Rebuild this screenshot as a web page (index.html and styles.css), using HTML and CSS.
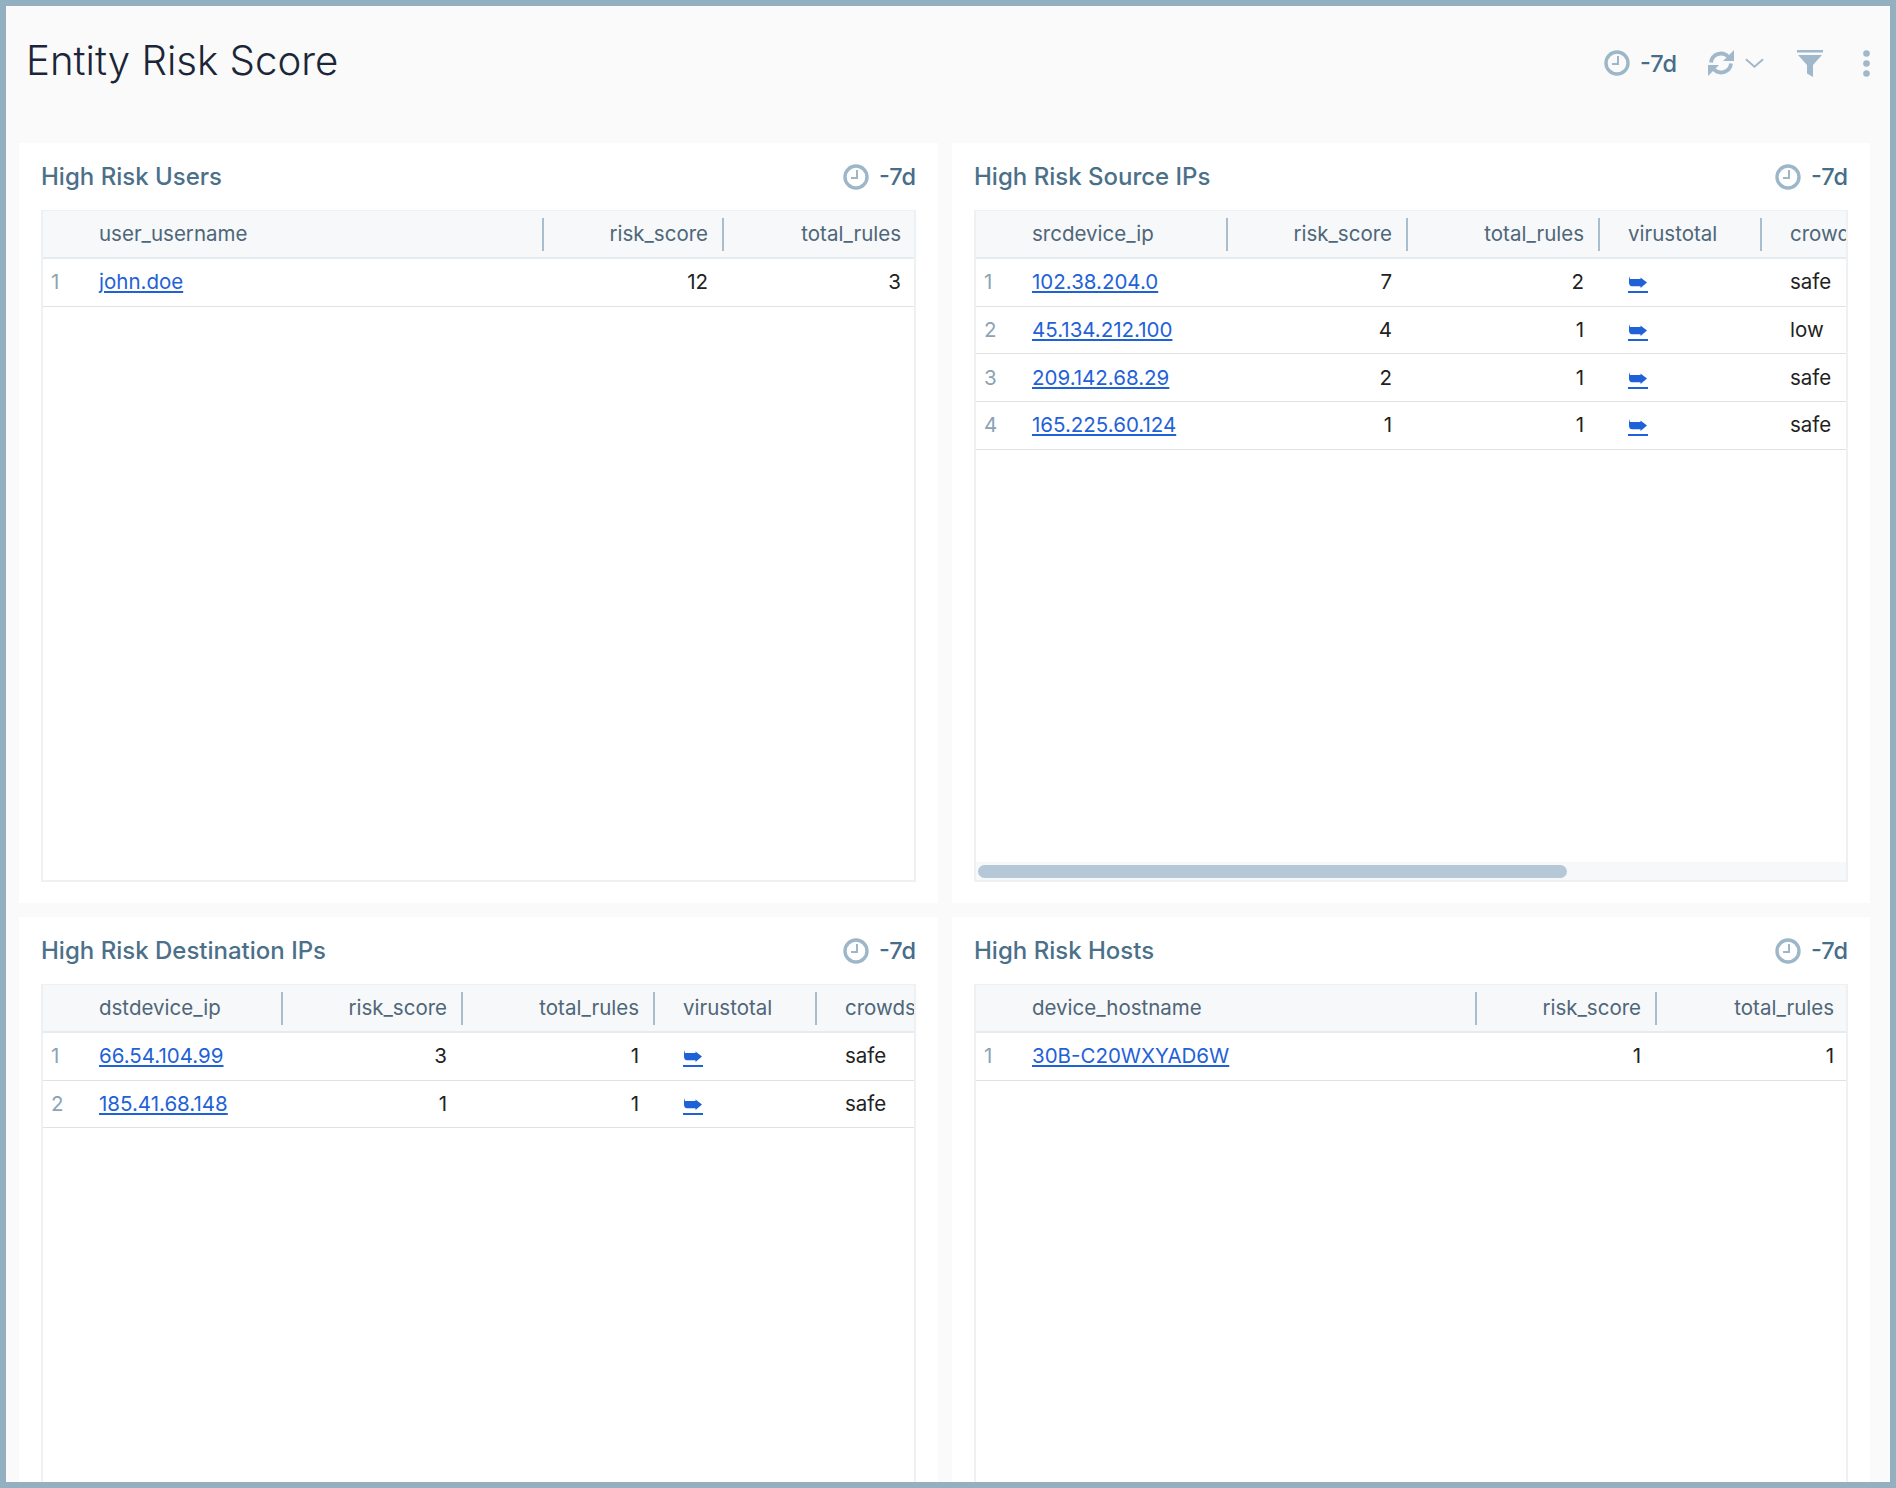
FILE: index.html
```html
<!DOCTYPE html>
<html lang="en">
  <head>
    <meta charset="UTF-8" />
    <title>Entity Risk Score</title>
    <link rel="stylesheet" href="styles.css">
  </head>
  <body>
    <svg class="defs" width="0" height="0">
      <symbol id="clock" viewBox="0 0 26 26">
        <circle cx="13" cy="13" r="11" fill="none" stroke="currentColor" stroke-width="3.400" />
        <path d="M14 6v8H8" fill="none" stroke="currentColor" stroke-width="2" />
      </symbol>
      <symbol id="go" viewBox="0 0 19 12">
        <path d="M1 0l1 3h10.500V1.500L19 6.500 12.500 12v-1.800H4Q1 10.200 1 6.500z" fill="currentColor" />
      </symbol>
    </svg>

    <div class="frame">
      <header class="topbar">
        <h1 class="page-title">Entity Risk Score</h1>
        <div class="tools">
          <span class="range range-top">
            <svg class="clock"><use href="#clock" /></svg>
            -7d
          </span>
          <svg class="refresh" viewBox="0 0 26 26">
            <path d="M3 12.500A10 10 0 0 1 20 6.500M23 13.500A10 10 0 0 1 6 19.500" fill="none" stroke="currentColor" stroke-width="3.800" />
            <path d="M26 0v11H15zM0 26V15h11z" fill="currentColor" />
          </svg>
          <svg class="chevron" viewBox="0 0 20 11">
            <path d="M1 1l9 8 9-8" fill="none" stroke="currentColor" stroke-width="2" />
          </svg>
          <svg class="funnel" viewBox="0 0 26 27">
            <path d="M0 0h26v2.500H0zM1 5h24l-9 10v12l-6-3.500V15z" fill="currentColor" />
          </svg>
          <svg class="dots" viewBox="0 0 7 27">
            <circle cx="3.500" cy="3.500" r="3.300" fill="currentColor" />
            <circle cx="3.500" cy="13.500" r="3.300" fill="currentColor" />
            <circle cx="3.500" cy="23.500" r="3.300" fill="currentColor" />
          </svg>
        </div>
      </header>

      <main class="panels">
        <section class="panel">
          <div class="panel-head">
            <h2>High Risk Users</h2>
            <span class="range"><svg class="clock"><use href="#clock" /></svg> -7d</span>
          </div>
          <div class="table-wrap">
            <table class="grid grid-short">
              <colgroup><col class="c-idx"><col class="c-wide"><col class="c-risk"><col class="c-total"></colgroup>
              <thead>
                <tr><th></th><th class="divided">user_username</th><th class="num divided">risk_score</th><th class="num">total_rules</th></tr>
              </thead>
              <tbody>
                <tr><td class="idx">1</td><td><a href="#">john.doe</a></td><td class="num">12</td><td class="num">3</td></tr>
              </tbody>
            </table>
          </div>
        </section>

        <section class="panel">
          <div class="panel-head">
            <h2>High Risk Source IPs</h2>
            <span class="range"><svg class="clock"><use href="#clock" /></svg> -7d</span>
          </div>
          <div class="table-wrap">
            <table class="grid grid-long">
              <colgroup><col class="c-idx"><col class="c-src"><col class="c-risk"><col class="c-total"><col class="c-vt"><col></colgroup>
              <thead>
                <tr><th></th><th class="divided">srcdevice_ip</th><th class="num divided">risk_score</th><th class="num divided">total_rules</th><th class="link-col divided">virustotal</th><th class="link-col">crowdstrike</th></tr>
              </thead>
              <tbody>
                <tr><td class="idx">1</td><td><a href="#">102.38.204.0</a></td><td class="num">7</td><td class="num">2</td><td class="link-col"><a class="go" href="#"><svg><use href="#go" /></svg></a></td><td class="link-col">safe</td></tr>
                <tr><td class="idx">2</td><td><a href="#">45.134.212.100</a></td><td class="num">4</td><td class="num">1</td><td class="link-col"><a class="go" href="#"><svg><use href="#go" /></svg></a></td><td class="link-col">low</td></tr>
                <tr><td class="idx">3</td><td><a href="#">209.142.68.29</a></td><td class="num">2</td><td class="num">1</td><td class="link-col"><a class="go" href="#"><svg><use href="#go" /></svg></a></td><td class="link-col">safe</td></tr>
                <tr><td class="idx">4</td><td><a href="#">165.225.60.124</a></td><td class="num">1</td><td class="num">1</td><td class="link-col"><a class="go" href="#"><svg><use href="#go" /></svg></a></td><td class="link-col">safe</td></tr>
              </tbody>
            </table>
            <div class="scrollbar"><div class="thumb"></div></div>
          </div>
        </section>

        <section class="panel">
          <div class="panel-head">
            <h2>High Risk Destination IPs</h2>
            <span class="range"><svg class="clock"><use href="#clock" /></svg> -7d</span>
          </div>
          <div class="table-wrap">
            <table class="grid grid-long">
              <colgroup><col class="c-idx"><col class="c-dst"><col class="c-risk"><col class="c-total"><col class="c-vt"><col></colgroup>
              <thead>
                <tr><th></th><th class="divided">dstdevice_ip</th><th class="num divided">risk_score</th><th class="num divided">total_rules</th><th class="link-col divided">virustotal</th><th class="link-col">crowdstrike</th></tr>
              </thead>
              <tbody>
                <tr><td class="idx">1</td><td><a href="#">66.54.104.99</a></td><td class="num">3</td><td class="num">1</td><td class="link-col"><a class="go" href="#"><svg><use href="#go" /></svg></a></td><td class="link-col">safe</td></tr>
                <tr><td class="idx">2</td><td><a href="#">185.41.68.148</a></td><td class="num">1</td><td class="num">1</td><td class="link-col"><a class="go" href="#"><svg><use href="#go" /></svg></a></td><td class="link-col">safe</td></tr>
              </tbody>
            </table>
          </div>
        </section>

        <section class="panel">
          <div class="panel-head">
            <h2>High Risk Hosts</h2>
            <span class="range"><svg class="clock"><use href="#clock" /></svg> -7d</span>
          </div>
          <div class="table-wrap">
            <table class="grid grid-short">
              <colgroup><col class="c-idx"><col class="c-wide"><col class="c-risk"><col class="c-total"></colgroup>
              <thead>
                <tr><th></th><th class="divided">device_hostname</th><th class="num divided">risk_score</th><th class="num">total_rules</th></tr>
              </thead>
              <tbody>
                <tr><td class="idx">1</td><td><a href="#">30B-C20WXYAD6W</a></td><td class="num">1</td><td class="num">1</td></tr>
              </tbody>
            </table>
          </div>
        </section>
      </main>
    </div>
  </body>
</html>
```

FILE: styles.css
```css
* {
  box-sizing: border-box;
}
body {
  margin: 0;
  font-family: Inter, "Noto Sans", sans-serif;
}
.defs {
  position: absolute;
}
.frame {
  height: 1488px;
  border: 6px solid #93b0c0;
  background: #fafafa;
  overflow: hidden;
}
.topbar {
  display: flex;
  justify-content: space-between;
  height: 137px;
  padding: 0 20px 0 20px;
}
.page-title {
  margin: 31px 0 0;
  font-size: 40.200px;
  font-weight: 300;
  line-height: 48px;
  color: #1b2638;
}
.tools {
  display: flex;
  align-items: center;
  height: 28px;
  margin-top: 43px;
  color: #a0b8ca;
}
.range {
  display: flex;
  align-items: center;
  gap: 10px;
  font-size: 23.500px;
  font-weight: 500;
  color: #466d89;
}
.clock {
  width: 26px;
  height: 26px;
  color: #9db6c8;
}
.range-top {
  margin-right: 31px;
}
.refresh {
  width: 26px;
  height: 26px;
}
.chevron {
  width: 19px;
  height: 11px;
  margin: 0 33px 0 11px;
}
.funnel {
  width: 26px;
  height: 27px;
  margin-right: 40px;
}
.dots {
  width: 7px;
  height: 27px;
}
.panels {
  display: grid;
  grid-template-columns: 919px 918px;
  grid-auto-rows: 760px;
  gap: 14px;
  padding-left: 13px;
}
.panel {
  display: flex;
  flex-direction: column;
  background: #fff;
  padding: 0 22px 21px;
}
.panel-head {
  display: flex;
  justify-content: space-between;
  align-items: center;
  height: 67px;
}
.panel-head h2 {
  margin: 0;
  font-size: 24px;
  font-weight: 500;
  color: #4b7089;
}
.table-wrap {
  position: relative;
  flex: 1;
  overflow: hidden;
  border: 2px solid #eef1f3;
  border-top-width: 1px;
}
.grid {
  table-layout: fixed;
  border-collapse: separate;
  border-spacing: 0;
  font-size: 20.500px;
}
.grid-short {
  width: 873px;
}
.grid-long {
  width: 1010px;
}
.grid-short .num:last-child {
  padding-right: 15px;
}
.c-idx {
  width: 40px;
}
.c-wide {
  width: 461px;
}
.c-src {
  width: 212px;
}
.c-dst {
  width: 200px;
}
.c-risk {
  width: 180px;
}
.c-total {
  width: 192px;
}
.c-vt {
  width: 162px;
}
th {
  position: relative;
  height: 48px;
  padding: 0 16px 1px;
  background: #f6f8fa;
  border-bottom: 2px solid #e6ebef;
  font-weight: 400;
  text-align: left;
  white-space: nowrap;
  overflow: hidden;
  color: #4f6678;
}
.divided::after {
  content: "";
  position: absolute;
  top: 7px;
  right: 0;
  width: 2px;
  height: 33px;
  background: #a9bdcd;
}
td {
  height: 47.670px;
  padding: 0 16px 1px;
  border-bottom: 1px solid #dde3e7;
  white-space: nowrap;
  color: #222;
}
.num {
  text-align: right;
}
th.link-col,
td.link-col {
  padding-left: 28px;
}
td.idx {
  padding: 0 0 1px 8px;
  color: #8ba3b5;
}
a {
  color: #1f62d8;
}
.go {
  display: inline-block;
  width: 20px;
  height: 17px;
  border-bottom: 2px solid #1f62d8;
  vertical-align: -4px;
}
.go svg {
  display: block;
  width: 19px;
  height: 12px;
}
.scrollbar {
  position: absolute;
  left: 0;
  right: 0;
  bottom: 0;
  height: 18px;
  padding: 3px 0 0 2px;
  background: #f6f8fa;
}
.thumb {
  width: 589px;
  height: 13px;
  border-radius: 7px;
  background: #b5c8d8;
}
```
